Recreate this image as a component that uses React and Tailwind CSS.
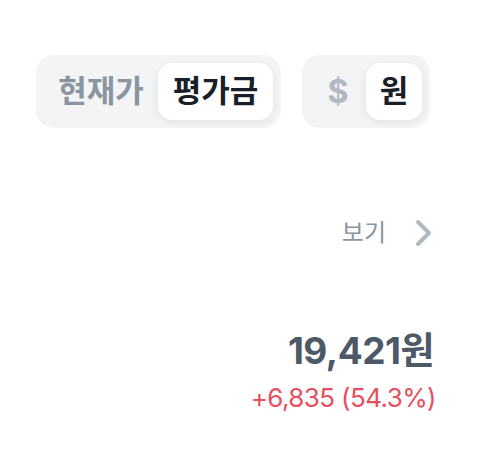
export default function App() {
  const font = { fontFamily: 'Inter, "Noto Sans CJK KR", sans-serif' };
  return (
    <div className="min-h-screen w-[496px] bg-white pt-[55px] pl-[36px] pr-[62px]" style={font}>
      {/* toggles */}
      <div className="flex gap-[21px]">
        <div className="flex rounded-[18px] bg-[#f2f4f6] p-2">
          <div className="flex h-[57px] w-[114px] items-center justify-center text-[31px] font-bold text-[#8b95a1]">현재가</div>
          <div className="flex h-[57px] w-[115px] items-center justify-center rounded-[14px] bg-white text-[31px] font-bold text-[#191f28] shadow-[0_2px_8px_rgba(0,0,0,0.08)]">평가금</div>
        </div>
        <div className="flex rounded-[18px] bg-[#f2f4f6] p-2">
          <div className="flex h-[57px] w-[56px] items-center justify-center text-[32px] font-bold text-[#b0b8c1]">$</div>
          <div className="flex h-[57px] w-[56px] items-center justify-center rounded-[14px] bg-white text-[31px] font-bold text-[#191f28] shadow-[0_2px_8px_rgba(0,0,0,0.08)]">원</div>
        </div>
      </div>

      {/* more link */}
      <div className="mt-[90px] flex items-center justify-end">
        <span className="text-[24px] leading-[30px] text-[#8b95a1]">보기</span>
        <svg className="ml-[28px]" width="20" height="30" viewBox="0 0 20 30" fill="none">
          <path d="M4 4 L15 15 L4 26" stroke="#b0b8c1" strokeWidth="4" strokeLinecap="round" strokeLinejoin="round" />
        </svg>
      </div>

      {/* value */}
      <div className="mt-[82px] flex flex-col items-end">
        <div className="text-[37px] font-bold leading-[42px] tracking-[-0.5px] text-[#4e5968]">19,421원</div>
        <div className="mt-[10px] mr-[-2px] text-[26px] leading-[32px] tracking-[-0.6px] text-[#e5505c]">+6,835 (54.3%)</div>
      </div>
    </div>
  );
}
